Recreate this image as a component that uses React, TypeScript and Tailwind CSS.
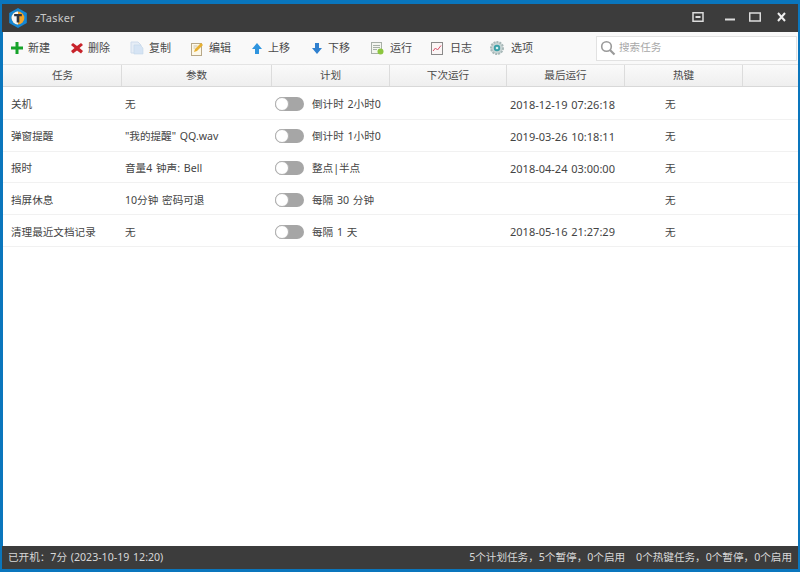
import React from "react";

const Plus = () => (
  <svg width="14" height="14" viewBox="0 0 14 14"><path d="M5.500 1h3v4.500H13v3H8.500V13h-3V8.500H1v-3h4.500z" fill="#16a32a" /></svg>
);
const Del = () => (
  <svg width="14" height="14" viewBox="0 0 14 14"><path d="M3 2l4 3 4-3 2 2-3.500 3L13 10l-2 2.500-4-3-4 3L1 10l3.500-3L1 4z" fill="#c8232b" /></svg>
);
const Copy = () => (
  <svg width="14" height="14" viewBox="0 0 14 14"><path d="M1 1h7l3 3v8H1z" fill="#e6edf6" stroke="#cfdcec" /><path d="M4 4h6l3 3v6H4z" fill="#d6e4f4" stroke="#c4d6ea" strokeWidth="0.6" /></svg>
);
const Edit = () => (
  <svg width="14" height="15" viewBox="0 0 14 15"><rect x="1.500" y="2.500" width="10" height="12" fill="#fdf8e8" stroke="#b8a888" /><path d="M4 11l1-3 6-6 2 2-6 6z" fill="#e8b030" /><path d="M3.500 5h4M3.500 7h2" stroke="#c8c0b0" /></svg>
);
const Up = () => (
  <svg width="12" height="13" viewBox="0 0 12 13"><path d="M6 1l5 6H8v5H4V7H1z" fill="#2f95df" /></svg>
);
const Down = () => (
  <svg width="12" height="13" viewBox="0 0 12 13"><path d="M6 12l5-6H8V1H4v5H1z" fill="#2f80cf" /></svg>
);
const Run = () => (
  <svg width="14" height="14" viewBox="0 0 14 14"><rect x="1.500" y="1.500" width="10" height="11" fill="#f4f6f0" stroke="#a8b0a8" /><path d="M3 4.500h7M3 6.500h7M3 8.500h4" stroke="#a8b0a8" /><circle cx="10.500" cy="10.500" r="3" fill="#8cc63f" /></svg>
);
const Log = () => (
  <svg width="14" height="15" viewBox="0 0 14 15"><rect x="1.500" y="1.500" width="11" height="12" fill="#fbf6f6" stroke="#8a8a8a" /><path d="M3 10l2.500-3 2 2L11 4.500" fill="none" stroke="#d8506a" /></svg>
);
const Gear = () => (
  <svg width="16" height="16" viewBox="0 0 16 16"><circle cx="8" cy="8" r="6" fill="#c8d4d4" stroke="#a8b8b8" strokeWidth="2" strokeDasharray="2 1" /><circle cx="8" cy="8" r="3.200" fill="#3aa0a8" /><circle cx="8" cy="8" r="1.300" fill="#d8f0f0" /></svg>
);
const Logo = () => (
  <svg width="22" height="22" viewBox="0 0 20 20">
    <path d="M10 1l8 4.500v9L10 19l-8-4.500v-9z" fill="#1487d6" />
    <circle cx="10" cy="10" r="5.800" fill="#f4a428" />
    <path d="M10 4.200a5.800 5.800 0 0 0 0 11.600z" fill="#f5f5f5" />
    <path d="M6.500 6.300h7v2.200h-2.300V14H8.800V8.500H6.500z" fill="#2d3440" />
  </svg>
);

const tools: { icon: React.ReactNode; label: string; gap: string }[] = [
  { icon: <Plus />, label: "新建", gap: "ml-[3px]" },
  { icon: <Del />, label: "删除", gap: "ml-[3px]" },
  { icon: <Copy />, label: "复制", gap: "ml-[4px]" },
  { icon: <Edit />, label: "编辑", gap: "ml-[4px]" },
  { icon: <Up />, label: "上移", gap: "ml-[3px]" },
  { icon: <Down />, label: "下移", gap: "ml-[3px]" },
  { icon: <Run />, label: "运行", gap: "ml-[5px]" },
  { icon: <Log />, label: "日志", gap: "ml-[5px]" },
  { icon: <Gear />, label: "选项", gap: "ml-[6px]" },
];

const rows = [
  ["关机", "无", "倒计时 2小时0", "2018-12-19 07:26:18", "无"],
  ["弹窗提醒", "\"我的提醒\" QQ.wav", "倒计时 1小时0", "2019-03-26 10:18:11", "无"],
  ["报时", "音量4 钟声: Bell", "整点|半点", "2018-04-24 03:00:00", "无"],
  ["挡屏休息", "10分钟 密码可退", "每隔 30 分钟", "", "无"],
  ["清理最近文档记录", "无", "每隔 1 天", "2018-05-16 21:27:29", "无"],
];

export default function App() {
  return (
    <div className="w-[800px] h-[572px] flex flex-col bg-[#0a76bd] pt-1 pb-[3px] pl-[3px] pr-[2px] overflow-hidden text-[10.6px] [word-spacing:1px] text-[#444] font-['Noto_Sans','Noto_Sans_CJK_SC',sans-serif]">
      <div className="h-[28px] shrink-0 bg-[#3c3c3c] flex items-center -ml-px">
        <div className="ml-[5px] mr-[6px] flex"><Logo /></div>
        <span className="text-[#c8c8c8] text-[11px] tracking-[0.2px] mt-[1px]">zTasker</span>
        <div className="ml-auto flex items-center mb-[3px]">
          <svg width="12" height="10" viewBox="0 0 12 10" className="mr-[20px]"><rect x="1" y="0.750" width="10" height="8.500" fill="none" stroke="#dcdcdc" strokeWidth="1.500" /><rect x="3.500" y="4" width="5" height="2" fill="#dcdcdc" /></svg>
          <svg width="12" height="10" viewBox="0 0 12 10" className="mr-[13px]"><rect x="1" y="6.500" width="10" height="2" fill="#dcdcdc" /></svg>
          <svg width="12" height="10" viewBox="0 0 12 10" className="mr-[16px]"><rect x="0.750" y="1" width="10.500" height="8" fill="none" stroke="#dcdcdc" strokeWidth="1.500" /></svg>
          <svg width="9" height="10" viewBox="0 0 9 10" className="mr-[12px]"><path d="M1 1l7 8M8 1L1 9" stroke="#eeeeee" strokeWidth="2" /></svg>
        </div>
      </div>
      <div className="h-[33px] shrink-0 bg-[#f9f9f9] flex items-center border-b border-[#e4e4e4] pl-[6px]">
        {tools.map(({ icon, label, gap }) => (
          <div key={label} className="w-[60px] shrink-0 flex items-center">
            <span className="w-[16px] h-[16px] flex items-center justify-center">{icon}</span>
            <span className={`${gap} text-[11px] text-[#4a4a4a] mt-px`}>{label}</span>
          </div>
        ))}
        <div className="ml-auto mr-px w-[201px] h-[25px] bg-white border border-[#e2e2e2] flex items-center pl-[3px]">
          <svg width="16" height="16" viewBox="0 0 16 16"><circle cx="6.500" cy="6.500" r="4.800" fill="none" stroke="#9a9a9a" strokeWidth="1.600" /><path d="M10 10l4.500 4.500" stroke="#9a9a9a" strokeWidth="2.200" /></svg>
          <span className="ml-[3px] text-[#a8a8a8]">搜索任务</span>
        </div>
      </div>
      <div className="h-[22px] shrink-0 grid grid-cols-[118px_150px_118px_117px_118px_118px_1fr] bg-gradient-to-b from-[#fafafa] to-[#efefef] border-b border-[#d8d8d8]">
        {["任务", "参数", "计划", "下次运行", "最后运行", "热键", ""].map((h, i) => (
          <div key={i} className="flex items-center justify-center border-r border-[#dcdcdc] last:border-r-0 text-[#4a4a4a] translate-x-px">{h}</div>
        ))}
      </div>
      <div className="flex-1 bg-white pt-px">
        {rows.map((r) => (
          <div key={r[0]} className="h-[31.800px] pt-[2px] grid grid-cols-[118px_150px_118px_117px_118px_118px_1fr] items-center border-b border-[#f1f1f1]">
            <div className="pl-[8px] pt-[2px]">{r[0]}</div>
            <div className="pl-[4px] pt-[2px]">{r[1]}</div>
            <div className="pl-[4px] flex items-center">
              <span className="w-[29px] h-[14px] rounded-full bg-[#a6a6a6] flex items-center mr-[8px] shrink-0">
                <span className="w-[14px] h-[14px] rounded-full bg-white border border-[#b0b0b0]" />
              </span>
              <span className="whitespace-nowrap pt-[2px]">{r[2]}</span>
            </div>
            <div />
            <div className="pl-[4px] pt-[2px] whitespace-nowrap text-[11px]">{r[3]}</div>
            <div className="pl-[41px] pt-[2px]">{r[4]}</div>
            <div />
          </div>
        ))}
      </div>
      <div className="h-[23px] shrink-0 bg-[#3c3c3c] -ml-px flex items-center justify-between pl-[6px] pr-[6px] text-[#d8d8d8]">
        <span>已开机：7分 (2023-10-19 12:20)</span>
        <div className="flex gap-[11px]">
          <span>5个计划任务，5个暂停，0个启用</span>
          <span>0个热键任务，0个暂停，0个启用</span>
        </div>
      </div>
    </div>
  );
}
